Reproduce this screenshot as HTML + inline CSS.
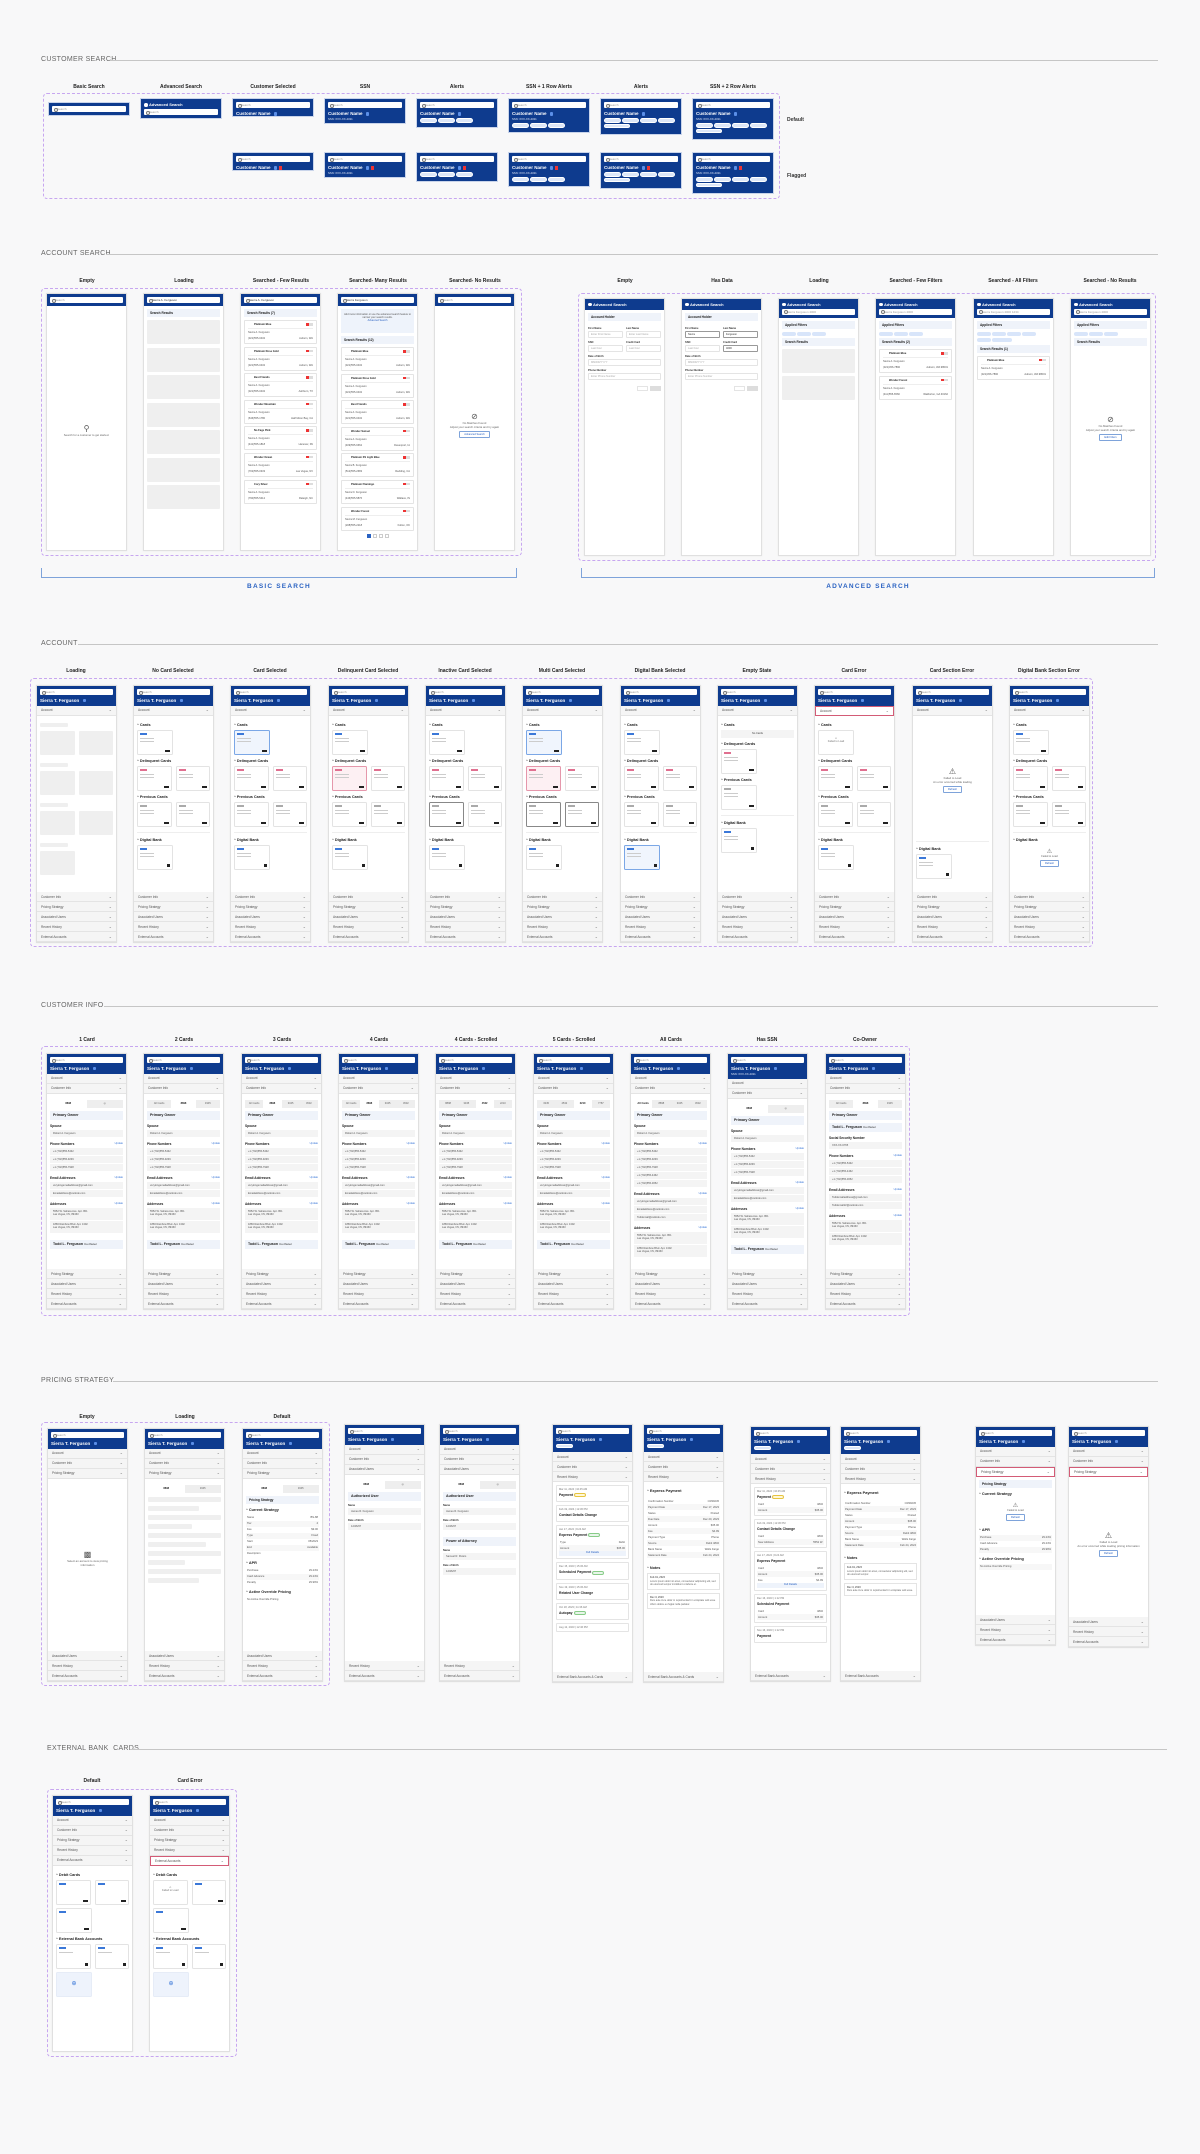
<!DOCTYPE html>
<html><head><meta charset="utf-8">
<style>
*{box-sizing:border-box;margin:0;padding:0}
body{width:1200px;height:2154px;background:#f8f8f9;position:relative;overflow:hidden;font-family:"Liberation Sans",sans-serif;color:#222}
.sh{position:absolute;font-size:7px;color:#666;letter-spacing:.3px}
.ln{position:absolute;height:1px;background:#c6c6c6}
.ct{position:absolute;width:120px;margin-left:-60px;text-align:center;font-size:5px;font-weight:bold;color:#222}
.dash{position:absolute;border:1px dashed #c7a6f0;border-radius:4px}
.brk{position:absolute;border:1px solid #7ea3da;border-top:none;height:10px}
.bl{position:absolute;font-size:6.5px;color:#2a62c2;letter-spacing:1.2px;font-weight:bold;width:200px;margin-left:-100px;text-align:center}
.lab{position:absolute;font-size:5px;font-weight:bold;color:#333}
.cs{position:absolute;width:82px;background:#0e3b8e;border:1px solid #c9d4ea;padding:3px}
.sb{height:6px;background:#fff;border-radius:1px;font-size:3px;color:#999;line-height:6px;padding-left:5px;position:relative}
.sb:before{content:"";position:absolute;left:1.5px;top:1.5px;width:2px;height:2px;border:.5px solid #777;border-radius:50%}
.nm{color:#fff;font-weight:bold;font-size:4.5px;margin-top:3px}
.nm i{display:inline-block;width:3.5px;height:3.5px;background:#5b8fe8;border-radius:1px;margin-left:2px;vertical-align:-0.5px}
.nm u{display:inline-block;width:3px;height:3.5px;background:#e33;margin-left:2px;vertical-align:-0.5px}
.ss{color:#dfe6f5;font-size:2.8px;margin-top:1px}
.chs{margin-top:2px;line-height:0}
.ch{display:inline-block;height:4.5px;width:17px;background:#dde7f8;border:.5px solid #fff;border-radius:3px;margin:0 1px 1.2px 0}
.ch.w{width:26px}
.ph{position:absolute;width:81px;background:#fff;border:1px solid #e0e0e0;box-shadow:0 0 2px rgba(0,0,0,.06);display:flex;flex-direction:column;overflow:hidden;font-size:3.2px;color:#444}
.hd{background:#0e3b8e;padding:3px 3px 3px}
.hd .nm{margin-top:2.5px}
.at{color:#fff;font-weight:bold;font-size:4px;padding:0 0 2px 0}
.at:before{content:"";display:inline-block;width:3.5px;height:3.5px;background:#fff;border-radius:50%;margin-right:1.5px;vertical-align:-0.5px}
.ar{height:10px;border-bottom:1px solid #e4e4e4;background:#f5f5f5;padding:0 4px;display:flex;justify-content:space-between;align-items:center;font-size:3.2px;color:#555;flex-shrink:0}
.ar:after{content:"\2304";font-size:4px;color:#777;line-height:2px}
.ar.er{border:1px solid #d35b76;background:#fff}
.bd{flex:1;padding:3px 3px 0;position:relative;overflow:hidden}
.bot{margin-top:auto}
.st{font-weight:bold;font-size:3.8px;color:#222;margin:4px 0 3px}
.st:before{content:"^ ";font-weight:normal}
.row{display:flex;gap:4px}
.cd{width:36px;height:25px;border:1px solid #e3e3e3;border-radius:1.5px;padding:2px;position:relative;font-size:2.6px;color:#777}
.cd b{display:block;width:7px;height:2.5px;background:#3b78d8;margin-bottom:3px}
.cd b.r{background:#e07090}
.cd b.g{background:#aaa}
.cd p{height:1.2px;background:#ccc;width:14px;margin-bottom:1.8px}
.cd .v{position:absolute;right:2px;bottom:2px;width:5px;height:2px;background:#222}
.cd.sel{border-color:#7ba7e6;background:#f0f5fd}
.cd.dl{border-color:#e597ab;background:#fdf0f3}
.cd.in{border-color:#888}
.hr{height:1px;background:#eee;margin:5px 0}
.sk{background:#efefef;border-radius:1px}
.srb{height:8px;background:#eff3fa;font-weight:bold;font-size:3.2px;color:#222;line-height:8px;padding-left:3px;margin-bottom:3px}
.ri{height:24px;border:1px solid #e4e4e4;border-radius:1px;margin-bottom:2.6px;padding:2px 3px;font-size:2.6px;color:#555}
.ri .rt{display:flex;justify-content:space-between;font-weight:bold;color:#222;border-bottom:1px solid #eee;padding:0 0 2px 6px;margin-bottom:2px}
.ri .rt span{width:7px;height:2.5px;background:linear-gradient(90deg,#e33 40%,#ddd 40%)}
.ri .sp{display:flex;justify-content:space-between;margin-top:3px}
.ctr{position:absolute;left:0;right:0;text-align:center;font-size:2.8px;color:#666}
.ctr .ic{font-size:8px;color:#555;line-height:8px}
.btn{display:inline-block;border:1px solid #7ea3da;color:#2a62c2;font-size:2.6px;padding:1px 4px;border-radius:1px;margin-top:2px}
.fl{font-size:2.6px;font-weight:bold;color:#333;margin:3px 0 1px}
.in1{height:7px;border:1px solid #e4e4e4;border-radius:1px;font-size:2.6px;color:#aaa;line-height:5px;padding-left:2px}
.g2{display:flex;gap:3px}.g2>div{flex:1}
.chip{display:inline-block;height:4px;width:14px;background:#d8e5fa;border-radius:2px;margin:0 1px 1.5px 0}
.tabs{display:flex;height:8px;background:#eee;margin:3px 0;font-size:2.6px;color:#666}
.tabs span{flex:1;text-align:center;line-height:8px}
.tabs span.a{background:#fff;font-weight:bold;color:#222}
.pob{height:9px;background:#eff3fa;font-weight:bold;font-size:3.6px;color:#222;line-height:9px;padding-left:3px;margin-bottom:3px}
.sec{font-weight:bold;font-size:3.2px;color:#222;margin:4px 0 2px;display:flex;justify-content:space-between}
.sec i{font-style:normal;color:#3b78d8;font-weight:normal;font-size:2.6px}
.fr{height:8px;background:#f4f4f4;font-size:2.6px;line-height:8px;padding-left:3px;border-bottom:1px solid #fff;color:#555}
.fr2{height:13px;background:#f4f4f4;font-size:2.6px;padding:2px 3px;border-bottom:1px solid #fff;color:#555}
.kv{display:flex;justify-content:space-between;font-size:2.7px;padding:1.5px 1px;color:#555}
.kv:nth-child(odd){background:#f7f7f7}
.hi{border:1px solid #e4e4e4;border-radius:1px;padding:2px;margin-bottom:3px;font-size:2.6px;color:#777}
.hi b{display:block;color:#222;font-size:3.4px;margin:2px 0}
.pill{display:inline-block;height:4px;width:12px;border-radius:2px;background:#e8f5ea;border:.5px solid #8c8;vertical-align:middle}
.pill.y{background:#fff8d8;border-color:#e6c440}
.note{border:1px solid #e4e4e4;padding:2px;margin-bottom:3px;font-size:2.5px;color:#666;line-height:3.5px}
</style></head><body>

<!-- ===== CUSTOMER SEARCH ===== -->
<div class="sh" style="left:41px;top:56px">CUSTOMER SEARCH</div>
<div class="ln" style="left:110px;top:60px;width:1048px"></div>
<div class="ct" style="left:89px;top:84px">Basic Search</div>
<div class="ct" style="left:181px;top:84px">Advanced Search</div>
<div class="ct" style="left:273px;top:84px">Customer Selected</div>
<div class="ct" style="left:365px;top:84px">SSN</div>
<div class="ct" style="left:457px;top:84px">Alerts</div>
<div class="ct" style="left:549px;top:84px">SSN + 1 Row Alerts</div>
<div class="ct" style="left:641px;top:84px">Alerts</div>
<div class="ct" style="left:733px;top:84px">SSN + 2 Row Alerts</div>
<div class="dash" style="left:43px;top:93px;width:737px;height:106px"></div>
<div class="lab" style="left:787px;top:117px">Default</div>
<div class="lab" style="left:787px;top:173px">Flagged</div>

<div class="cs" style="left:48px;top:102px;height:14px"><div class="sb" style="height:6px">Search</div></div>
<div class="cs" style="left:140px;top:98px;height:21px"><div class="at">Advanced Search</div><div class="sb">Search</div></div>
<div class="cs" style="left:232px;top:98px;height:19px"><div class="sb">Search</div><div class="nm">Customer Name <i></i></div></div>
<div class="cs" style="left:324px;top:98px;height:26px"><div class="sb">Search</div><div class="nm">Customer Name <i></i></div><div class="ss">SSN: XXX-XX-4321</div></div>
<div class="cs" style="left:416px;top:98px;height:30px"><div class="sb">Search</div><div class="nm">Customer Name <i></i></div><div class="chs"><span class="ch"></span><span class="ch"></span><span class="ch"></span></div></div>
<div class="cs" style="left:508px;top:98px;height:35px"><div class="sb">Search</div><div class="nm">Customer Name <i></i></div><div class="ss">SSN: XXX-XX-4321</div><div class="chs"><span class="ch"></span><span class="ch"></span><span class="ch"></span></div></div>
<div class="cs" style="left:600px;top:98px;height:37px"><div class="sb">Search</div><div class="nm">Customer Name <i></i></div><div class="chs"><span class="ch"></span><span class="ch"></span><span class="ch"></span><span class="ch"></span><span class="ch w"></span></div></div>
<div class="cs" style="left:692px;top:98px;height:42px"><div class="sb">Search</div><div class="nm">Customer Name <i></i></div><div class="ss">SSN: XXX-XX-4321</div><div class="chs"><span class="ch"></span><span class="ch"></span><span class="ch"></span><span class="ch"></span><span class="ch w"></span></div></div>

<div class="cs" style="left:232px;top:152px;height:19px"><div class="sb">Search</div><div class="nm">Customer Name <i></i><u></u></div></div>
<div class="cs" style="left:324px;top:152px;height:26px"><div class="sb">Search</div><div class="nm">Customer Name <i></i><u></u></div><div class="ss">SSN: XXX-XX-4321</div></div>
<div class="cs" style="left:416px;top:152px;height:30px"><div class="sb">Search</div><div class="nm">Customer Name <i></i><u></u></div><div class="chs"><span class="ch"></span><span class="ch"></span><span class="ch"></span></div></div>
<div class="cs" style="left:508px;top:152px;height:35px"><div class="sb">Search</div><div class="nm">Customer Name <i></i><u></u></div><div class="ss">SSN: XXX-XX-4321</div><div class="chs"><span class="ch"></span><span class="ch"></span><span class="ch"></span></div></div>
<div class="cs" style="left:600px;top:152px;height:37px"><div class="sb">Search</div><div class="nm">Customer Name <i></i><u></u></div><div class="chs"><span class="ch"></span><span class="ch"></span><span class="ch"></span><span class="ch"></span><span class="ch w"></span></div></div>
<div class="cs" style="left:692px;top:152px;height:42px"><div class="sb">Search</div><div class="nm">Customer Name <i></i><u></u></div><div class="ss">SSN: XXX-XX-4321</div><div class="chs"><span class="ch"></span><span class="ch"></span><span class="ch"></span><span class="ch"></span><span class="ch w"></span></div></div>

<!-- ===== ACCOUNT SEARCH ===== -->
<div class="sh" style="left:41px;top:250px">ACCOUNT SEARCH</div>
<div class="ln" style="left:106px;top:254px;width:1052px"></div>
<div class="ct" style="left:87px;top:278px">Empty</div>
<div class="ct" style="left:184px;top:278px">Loading</div>
<div class="ct" style="left:281px;top:278px">Searched - Few Results</div>
<div class="ct" style="left:378px;top:278px">Searched- Many Results</div>
<div class="ct" style="left:475px;top:278px">Searched- No Results</div>
<div class="ct" style="left:625px;top:278px">Empty</div>
<div class="ct" style="left:722px;top:278px">Has Data</div>
<div class="ct" style="left:819px;top:278px">Loading</div>
<div class="ct" style="left:916px;top:278px">Searched - Few Filters</div>
<div class="ct" style="left:1013px;top:278px">Searched - All Filters</div>
<div class="ct" style="left:1110px;top:278px">Searched - No Results</div>
<div class="dash" style="left:41px;top:288px;width:481px;height:268px"></div>
<div class="dash" style="left:578px;top:293px;width:578px;height:268px"></div>
<div class="brk" style="left:41px;top:568px;width:476px"></div>
<div class="brk" style="left:581px;top:568px;width:574px"></div>
<div class="bl" style="left:279px;top:583px">BASIC SEARCH</div>
<div class="bl" style="left:868px;top:583px">ADVANCED SEARCH</div>

<div class="ph" style="left:46px;top:293px;height:258px"><div class="hd" style="padding:3px"><div class="sb">Search</div></div><div class="bd"><div class="ctr" style="top:119px"><div class="ic">&#9906;</div>Search for a customer to get started.</div></div></div>
<div class="ph" style="left:143px;top:293px;height:258px"><div class="hd"><div class="sb" style="color:#333">Sierra A. Ferguson</div></div><div class="bd"><div class="srb">Search Results</div>
<div class="sk" style="height:24px;margin-bottom:3.5px"></div><div class="sk" style="height:24px;margin-bottom:3.5px"></div><div class="sk" style="height:24px;margin-bottom:3.5px"></div><div class="sk" style="height:24px;margin-bottom:3.5px"></div><div class="sk" style="height:24px;margin-bottom:3.5px"></div><div class="sk" style="height:24px;margin-bottom:3.5px"></div><div class="sk" style="height:24px"></div></div></div>
<div class="ph" style="left:240px;top:293px;height:258px"><div class="hd"><div class="sb" style="color:#333">Sierra A. Ferguson</div></div><div class="bd"><div class="srb">Search Results (7)</div>
<div class="ri"><div class="rt">Platinum Blue<span></span></div>Sierra A. Ferguson<div class="sp"><span>(321)555-0432</span><span>Auburn, WA</span></div></div>
<div class="ri"><div class="rt">Platinum Rose Gold<span></span></div>Sierra A. Ferguson<div class="sp"><span>(321)555-0432</span><span>Auburn, WA</span></div></div>
<div class="ri"><div class="rt">Best Friends<span></span></div>Sierra A. Ferguson<div class="sp"><span>(321)555-0432</span><span>Ashburn, TX</span></div></div>
<div class="ri"><div class="rt">Wonder Mountain<span></span></div>Sierra A. Ferguson<div class="sp"><span>(646)555-1780</span><span>Half Moon Bay, CA</span></div></div>
<div class="ri"><div class="rt">No Fags Pink<span></span></div>Sierra A. Ferguson<div class="sp"><span>(441)555-1818</span><span>Hanover, PA</span></div></div>
<div class="ri"><div class="rt">Wonder Ocean<span></span></div>Sierra A. Ferguson<div class="sp"><span>(702)555-0333</span><span>Las Vegas, NV</span></div></div>
<div class="ri"><div class="rt">Cory Silver<span></span></div>Sierra A. Ferguson<div class="sp"><span>(790)555-5412</span><span>Raleigh, NC</span></div></div></div></div>
<div class="ph" style="left:337px;top:293px;height:258px"><div class="hd"><div class="sb" style="color:#333">Sierra Ferguson</div></div><div class="bd"><div style="height:24px;background:#eef3fb;font-size:2.5px;text-align:center;padding-top:4px;color:#555;margin-bottom:3px">Add more information or use the advanced search feature to narrow your search results.<br><span style="color:#2a62c2">Advanced Search</span></div><div class="srb">Search Results (12)</div>
<div class="ri"><div class="rt">Platinum Blue<span></span></div>Sierra A. Ferguson<div class="sp"><span>(321)555-0432</span><span>Auburn, WA</span></div></div>
<div class="ri"><div class="rt">Platinum Rose Gold<span></span></div>Sierra A. Ferguson<div class="sp"><span>(321)555-0432</span><span>Auburn, WA</span></div></div>
<div class="ri"><div class="rt">Best Friends<span></span></div>Sierra A. Ferguson<div class="sp"><span>(321)555-0432</span><span>Auburn, WA</span></div></div>
<div class="ri"><div class="rt">Wonder Sunset<span></span></div>Sierra A. Ferguson<div class="sp"><span>(409)555-6662</span><span>Davenport, IA</span></div></div>
<div class="ri"><div class="rt">Platinum XS Light Blue<span></span></div>Sierra B. Ferguson<div class="sp"><span>(512)555-2683</span><span>Redding, CA</span></div></div>
<div class="ri"><div class="rt">Platinum Flamingo<span></span></div>Sierra D. Ferguson<div class="sp"><span>(446)555-5876</span><span>Wallace, IN</span></div></div>
<div class="ri"><div class="rt">Wonder Forest<span></span></div>Sierra M. Ferguson<div class="sp"><span>(208)555-2218</span><span>Fulton, OK</span></div></div>
<div style="text-align:center;margin-top:3px;line-height:0"><span style="display:inline-block;width:4px;height:4px;background:#2a62c2;margin:0 1px"></span><span style="display:inline-block;width:4px;height:4px;border:.5px solid #ccc;margin:0 1px"></span><span style="display:inline-block;width:4px;height:4px;border:.5px solid #ccc;margin:0 1px"></span><span style="display:inline-block;width:4px;height:4px;border:.5px solid #ccc;margin:0 1px"></span></div></div></div>
<div class="ph" style="left:434px;top:293px;height:258px"><div class="hd"><div class="sb">Search</div></div><div class="bd"><div class="ctr" style="top:107px"><div class="ic">&#8856;</div>No Matches Found<br>Adjust your search criteria and try again<br><span class="btn">Advanced Search</span></div></div></div>

<!-- advanced -->
<div class="ph" style="left:584px;top:298px;height:258px"><div class="hd" style="padding:2.5px 3px 1px"><div class="at">Advanced Search</div></div><div class="bd"><div class="srb">Account Holder</div>
<div class="g2"><div><div class="fl">First Name</div><div class="in1">Enter First Name</div></div><div><div class="fl">Last Name</div><div class="in1">Enter Last Name</div></div></div>
<div class="g2"><div><div class="fl">SSN</div><div class="in1">Last Four</div></div><div><div class="fl">Credit Card</div><div class="in1">Last Four</div></div></div>
<div class="fl">Date of Birth</div><div class="in1">MM/DD/YYYY</div><div class="fl">Phone Number</div><div class="in1">Enter Phone Number</div>
<div style="text-align:right;margin-top:6px;line-height:0"><span style="display:inline-block;width:11px;height:5px;border:1px solid #e4e4e4;margin-right:2px"></span><span style="display:inline-block;width:11px;height:5px;background:#ddd"></span></div></div></div>
<div class="ph" style="left:681px;top:298px;height:258px"><div class="hd" style="padding:2.5px 3px 1px"><div class="at">Advanced Search</div></div><div class="bd"><div class="srb">Account Holder</div>
<div class="g2"><div><div class="fl">First Name</div><div class="in1" style="border-color:#999;color:#333">Sierra</div></div><div><div class="fl">Last Name</div><div class="in1" style="border-color:#999;color:#333">Ferguson</div></div></div>
<div class="g2"><div><div class="fl">SSN</div><div class="in1">Last Four</div></div><div><div class="fl">Credit Card</div><div class="in1" style="border-color:#999;color:#333">4000</div></div></div>
<div class="fl">Date of Birth</div><div class="in1">MM/DD/YYYY</div><div class="fl">Phone Number</div><div class="in1">Enter Phone Number</div>
<div style="text-align:right;margin-top:6px;line-height:0"><span style="display:inline-block;width:11px;height:5px;border:1px solid #e4e4e4;margin-right:2px"></span><span style="display:inline-block;width:11px;height:5px;background:#ddd"></span></div></div></div>
<div class="ph" style="left:778px;top:298px;height:258px"><div class="hd" style="padding:2.5px 3px 3px"><div class="at">Advanced Search</div><div class="sb">Sierra Ferguson 4000</div></div><div class="bd"><div class="srb">Applied Filters</div><div><span class="chip"></span><span class="chip"></span><span class="chip"></span></div><div class="srb">Search Results</div><div class="sk" style="height:24px;margin-bottom:3px"></div><div class="sk" style="height:24px"></div></div></div>
<div class="ph" style="left:875px;top:298px;height:258px"><div class="hd" style="padding:2.5px 3px 3px"><div class="at">Advanced Search</div><div class="sb">Sierra Ferguson 4000</div></div><div class="bd"><div class="srb">Applied Filters</div><div><span class="chip"></span><span class="chip"></span><span class="chip"></span></div><div class="srb">Search Results (2)</div>
<div class="ri"><div class="rt">Platinum Blue<span></span></div>Sierra A. Ferguson<div class="sp"><span>(321)456-7890</span><span>Auburn, WA 98001</span></div></div>
<div class="ri"><div class="rt">Wonder Forest<span></span></div>Sierra A. Ferguson<div class="sp"><span>(411)555-6560</span><span>Waldorton, GA 30162</span></div></div></div></div>
<div class="ph" style="left:973px;top:298px;height:258px"><div class="hd" style="padding:2.5px 3px 3px"><div class="at">Advanced Search</div><div class="sb">Sierra Ferguson 4000 1234</div></div><div class="bd"><div class="srb">Applied Filters</div><div><span class="chip"></span><span class="chip"></span><span class="chip"></span><span class="chip"></span><span class="chip"></span><span class="chip" style="width:20px"></span></div><div class="srb">Search Results (1)</div>
<div class="ri"><div class="rt">Platinum Blue<span></span></div>Sierra A. Ferguson<div class="sp"><span>(321)456-7890</span><span>Auburn, WA 98001</span></div></div></div></div>
<div class="ph" style="left:1070px;top:298px;height:258px"><div class="hd" style="padding:2.5px 3px 3px"><div class="at">Advanced Search</div><div class="sb">Sierra Ferguson 4000</div></div><div class="bd"><div class="srb">Applied Filters</div><div><span class="chip"></span><span class="chip"></span><span class="chip"></span></div><div class="srb">Search Results</div><div class="ctr" style="top:98px"><div class="ic">&#8856;</div>No Matches Found<br>Adjust your search criteria and try again<br><span class="btn">Edit Filters</span></div></div></div>

<!-- ===== ACCOUNT ===== -->
<div class="sh" style="left:41px;top:640px">ACCOUNT</div>
<div class="ln" style="left:78px;top:644px;width:1080px"></div>
<div class="ct" style="left:76px;top:668px">Loading</div>
<div class="ct" style="left:173px;top:668px">No Card Selected</div>
<div class="ct" style="left:270px;top:668px">Card Selected</div>
<div class="ct" style="left:368px;top:668px">Delinquent Card Selected</div>
<div class="ct" style="left:465px;top:668px">Inactive Card Selected</div>
<div class="ct" style="left:562px;top:668px">Multi Card Selected</div>
<div class="ct" style="left:660px;top:668px">Digital Bank Selected</div>
<div class="ct" style="left:757px;top:668px">Empty State</div>
<div class="ct" style="left:854px;top:668px">Card Error</div>
<div class="ct" style="left:952px;top:668px">Card Section Error</div>
<div class="ct" style="left:1049px;top:668px">Digital Bank Section Error</div>
<div class="dash" style="left:30px;top:678px;width:1063px;height:269px"></div>

<!-- account phones generated by hand -->
<div class="ph" style="left:36px;top:685px;height:258px"><div class="hd"><div class="sb">Search</div><div class="nm">Sierra T. Ferguson <i></i></div></div><div class="ar">Account</div><div class="bd">
<div class="sk" style="width:28px;height:4px;margin:4px 0"></div><div class="row"><div class="sk" style="width:35px;height:24px"></div><div class="sk" style="width:35px;height:24px"></div></div>
<div class="sk" style="width:28px;height:4px;margin:8px 0 4px"></div><div class="row"><div class="sk" style="width:35px;height:24px"></div><div class="sk" style="width:35px;height:24px"></div></div>
<div class="sk" style="width:28px;height:4px;margin:8px 0 4px"></div><div class="row"><div class="sk" style="width:35px;height:24px"></div><div class="sk" style="width:35px;height:24px"></div></div>
<div class="sk" style="width:28px;height:4px;margin:8px 0 4px"></div><div class="sk" style="width:35px;height:24px"></div></div>
<div class="bot"><div class="ar">Customer Info</div><div class="ar">Pricing Strategy</div><div class="ar">Associated Users</div><div class="ar">Recent History</div><div class="ar">External Accounts</div></div></div>

<div class="ph" style="left:133px;top:685px;height:258px"><div class="hd"><div class="sb">Search</div><div class="nm">Sierra T. Ferguson <i></i></div></div><div class="ar">Account</div><div class="bd">
<div class="st">Cards</div><div class="row"><div class="cd"><b></b><p></p><p></p><span class="v"></span></div></div>
<div class="st">Delinquent Cards</div><div class="row"><div class="cd"><b class="r"></b><p></p><p></p><span class="v"></span></div><div class="cd"><b class="r"></b><p></p><p></p><span class="v"></span></div></div>
<div class="st">Previous Cards</div><div class="row"><div class="cd"><b class="g"></b><p></p><p></p><span class="v"></span></div><div class="cd"><b class="g"></b><p></p><p></p><span class="v"></span></div></div>
<div class="hr"></div><div class="st">Digital Bank</div><div class="row"><div class="cd"><b></b><p></p><p></p><span class="v" style="width:3px;height:3px"></span></div></div></div>
<div class="bot"><div class="ar">Customer Info</div><div class="ar">Pricing Strategy</div><div class="ar">Associated Users</div><div class="ar">Recent History</div><div class="ar">External Accounts</div></div></div>

<div class="ph" style="left:230px;top:685px;height:258px"><div class="hd"><div class="sb">Search</div><div class="nm">Sierra T. Ferguson <i></i></div></div><div class="ar">Account</div><div class="bd">
<div class="st">Cards</div><div class="row"><div class="cd sel"><b></b><p></p><p></p><span class="v"></span></div></div>
<div class="st">Delinquent Cards</div><div class="row"><div class="cd"><b class="r"></b><p></p><p></p><span class="v"></span></div><div class="cd"><b class="r"></b><p></p><p></p><span class="v"></span></div></div>
<div class="st">Previous Cards</div><div class="row"><div class="cd"><b class="g"></b><p></p><p></p><span class="v"></span></div><div class="cd"><b class="g"></b><p></p><p></p><span class="v"></span></div></div>
<div class="hr"></div><div class="st">Digital Bank</div><div class="row"><div class="cd"><b></b><p></p><p></p><span class="v" style="width:3px;height:3px"></span></div></div></div>
<div class="bot"><div class="ar">Customer Info</div><div class="ar">Pricing Strategy</div><div class="ar">Associated Users</div><div class="ar">Recent History</div><div class="ar">External Accounts</div></div></div>

<div class="ph" style="left:328px;top:685px;height:258px"><div class="hd"><div class="sb">Search</div><div class="nm">Sierra T. Ferguson <i></i></div></div><div class="ar">Account</div><div class="bd">
<div class="st">Cards</div><div class="row"><div class="cd"><b></b><p></p><p></p><span class="v"></span></div></div>
<div class="st">Delinquent Cards</div><div class="row"><div class="cd dl"><b class="r"></b><p></p><p></p><span class="v"></span></div><div class="cd"><b class="r"></b><p></p><p></p><span class="v"></span></div></div>
<div class="st">Previous Cards</div><div class="row"><div class="cd"><b class="g"></b><p></p><p></p><span class="v"></span></div><div class="cd"><b class="g"></b><p></p><p></p><span class="v"></span></div></div>
<div class="hr"></div><div class="st">Digital Bank</div><div class="row"><div class="cd"><b></b><p></p><p></p><span class="v" style="width:3px;height:3px"></span></div></div></div>
<div class="bot"><div class="ar">Customer Info</div><div class="ar">Pricing Strategy</div><div class="ar">Associated Users</div><div class="ar">Recent History</div><div class="ar">External Accounts</div></div></div>

<div class="ph" style="left:425px;top:685px;height:258px"><div class="hd"><div class="sb">Search</div><div class="nm">Sierra T. Ferguson <i></i></div></div><div class="ar">Account</div><div class="bd">
<div class="st">Cards</div><div class="row"><div class="cd"><b></b><p></p><p></p><span class="v"></span></div></div>
<div class="st">Delinquent Cards</div><div class="row"><div class="cd"><b class="r"></b><p></p><p></p><span class="v"></span></div><div class="cd"><b class="r"></b><p></p><p></p><span class="v"></span></div></div>
<div class="st">Previous Cards</div><div class="row"><div class="cd in"><b class="g"></b><p></p><p></p><span class="v"></span></div><div class="cd"><b class="g"></b><p></p><p></p><span class="v"></span></div></div>
<div class="hr"></div><div class="st">Digital Bank</div><div class="row"><div class="cd"><b></b><p></p><p></p><span class="v" style="width:3px;height:3px"></span></div></div></div>
<div class="bot"><div class="ar">Customer Info</div><div class="ar">Pricing Strategy</div><div class="ar">Associated Users</div><div class="ar">Recent History</div><div class="ar">External Accounts</div></div></div>

<div class="ph" style="left:522px;top:685px;height:258px"><div class="hd"><div class="sb">Search</div><div class="nm">Sierra T. Ferguson <i></i></div></div><div class="ar">Account</div><div class="bd">
<div class="st">Cards</div><div class="row"><div class="cd sel"><b></b><p></p><p></p><span class="v"></span></div></div>
<div class="st">Delinquent Cards</div><div class="row"><div class="cd dl"><b class="r"></b><p></p><p></p><span class="v"></span></div><div class="cd"><b class="r"></b><p></p><p></p><span class="v"></span></div></div>
<div class="st">Previous Cards</div><div class="row"><div class="cd in"><b class="g"></b><p></p><p></p><span class="v"></span></div><div class="cd in"><b class="g"></b><p></p><p></p><span class="v"></span></div></div>
<div class="hr"></div><div class="st">Digital Bank</div><div class="row"><div class="cd"><b></b><p></p><p></p><span class="v" style="width:3px;height:3px"></span></div></div></div>
<div class="bot"><div class="ar">Customer Info</div><div class="ar">Pricing Strategy</div><div class="ar">Associated Users</div><div class="ar">Recent History</div><div class="ar">External Accounts</div></div></div>

<div class="ph" style="left:620px;top:685px;height:258px"><div class="hd"><div class="sb">Search</div><div class="nm">Sierra T. Ferguson <i></i></div></div><div class="ar">Account</div><div class="bd">
<div class="st">Cards</div><div class="row"><div class="cd"><b></b><p></p><p></p><span class="v"></span></div></div>
<div class="st">Delinquent Cards</div><div class="row"><div class="cd"><b class="r"></b><p></p><p></p><span class="v"></span></div><div class="cd"><b class="r"></b><p></p><p></p><span class="v"></span></div></div>
<div class="st">Previous Cards</div><div class="row"><div class="cd"><b class="g"></b><p></p><p></p><span class="v"></span></div><div class="cd"><b class="g"></b><p></p><p></p><span class="v"></span></div></div>
<div class="hr"></div><div class="st">Digital Bank</div><div class="row"><div class="cd sel"><b></b><p></p><p></p><span class="v" style="width:3px;height:3px"></span></div></div></div>
<div class="bot"><div class="ar">Customer Info</div><div class="ar">Pricing Strategy</div><div class="ar">Associated Users</div><div class="ar">Recent History</div><div class="ar">External Accounts</div></div></div>

<div class="ph" style="left:717px;top:685px;height:258px"><div class="hd"><div class="sb">Search</div><div class="nm">Sierra T. Ferguson <i></i></div></div><div class="ar">Account</div><div class="bd">
<div class="st">Cards</div><div style="height:8px;background:#f4f4f4;text-align:center;line-height:8px;font-size:2.6px">No Cards</div>
<div class="st">Delinquent Cards</div><div class="row"><div class="cd"><b class="r"></b><p></p><p></p><span class="v"></span></div></div>
<div class="st">Previous Cards</div><div class="row"><div class="cd"><b class="g"></b><p></p><p></p><span class="v"></span></div></div>
<div class="hr"></div><div class="st">Digital Bank</div><div class="row"><div class="cd"><b></b><p></p><p></p><span class="v" style="width:3px;height:3px"></span></div></div></div>
<div class="bot"><div class="ar">Customer Info</div><div class="ar">Pricing Strategy</div><div class="ar">Associated Users</div><div class="ar">Recent History</div><div class="ar">External Accounts</div></div></div>

<div class="ph" style="left:814px;top:685px;height:258px"><div class="hd"><div class="sb">Search</div><div class="nm">Sierra T. Ferguson <i></i></div></div><div class="ar er">Account</div><div class="bd">
<div class="st">Cards</div><div class="row"><div class="cd" style="text-align:center;padding-top:6px">&#9888;<br>Failed to Load</div></div>
<div class="st">Delinquent Cards</div><div class="row"><div class="cd"><b class="r"></b><p></p><p></p><span class="v"></span></div><div class="cd"><b class="r"></b><p></p><p></p><span class="v"></span></div></div>
<div class="st">Previous Cards</div><div class="row"><div class="cd"><b class="g"></b><p></p><p></p><span class="v"></span></div><div class="cd"><b class="g"></b><p></p><p></p><span class="v"></span></div></div>
<div class="hr"></div><div class="st">Digital Bank</div><div class="row"><div class="cd"><b></b><p></p><p></p><span class="v" style="width:3px;height:3px"></span></div></div></div>
<div class="bot"><div class="ar">Customer Info</div><div class="ar">Pricing Strategy</div><div class="ar">Associated Users</div><div class="ar">Recent History</div><div class="ar">External Accounts</div></div></div>

<div class="ph" style="left:912px;top:685px;height:258px"><div class="hd"><div class="sb">Search</div><div class="nm">Sierra T. Ferguson <i></i></div></div><div class="ar">Account</div><div class="bd">
<div class="ctr" style="top:52px"><div class="ic">&#9888;</div>Failed to Load<br>An error occurred while loading<br><span class="btn">Refresh</span></div>
<div style="position:absolute;top:120px;left:3px;right:3px"><div class="hr"></div><div class="st">Digital Bank</div><div class="row"><div class="cd"><b></b><p></p><p></p><span class="v" style="width:3px;height:3px"></span></div></div></div></div>
<div class="bot"><div class="ar">Customer Info</div><div class="ar">Pricing Strategy</div><div class="ar">Associated Users</div><div class="ar">Recent History</div><div class="ar">External Accounts</div></div></div>

<div class="ph" style="left:1009px;top:685px;height:258px"><div class="hd"><div class="sb">Search</div><div class="nm">Sierra T. Ferguson <i></i></div></div><div class="ar">Account</div><div class="bd">
<div class="st">Cards</div><div class="row"><div class="cd"><b></b><p></p><p></p><span class="v"></span></div></div>
<div class="st">Delinquent Cards</div><div class="row"><div class="cd"><b class="r"></b><p></p><p></p><span class="v"></span></div><div class="cd"><b class="r"></b><p></p><p></p><span class="v"></span></div></div>
<div class="st">Previous Cards</div><div class="row"><div class="cd"><b class="g"></b><p></p><p></p><span class="v"></span></div><div class="cd"><b class="g"></b><p></p><p></p><span class="v"></span></div></div>
<div class="hr"></div><div class="st">Digital Bank</div><div style="text-align:center;font-size:2.6px;color:#666;padding-top:3px"><span style="font-size:6px">&#9888;</span><br>Failed to Load<br><span class="btn">Refresh</span></div></div>
<div class="bot"><div class="ar">Customer Info</div><div class="ar">Pricing Strategy</div><div class="ar">Associated Users</div><div class="ar">Recent History</div><div class="ar">External Accounts</div></div></div>

<!-- ===== CUSTOMER INFO ===== -->
<div class="sh" style="left:41px;top:1002px">CUSTOMER INFO</div>
<div class="ln" style="left:104px;top:1006px;width:1054px"></div>
<div class="ct" style="left:87px;top:1037px">1 Card</div>
<div class="ct" style="left:184px;top:1037px">2 Cards</div>
<div class="ct" style="left:282px;top:1037px">3 Cards</div>
<div class="ct" style="left:379px;top:1037px">4 Cards</div>
<div class="ct" style="left:476px;top:1037px">4 Cards - Scrolled</div>
<div class="ct" style="left:574px;top:1037px">5 Cards - Scrolled</div>
<div class="ct" style="left:671px;top:1037px">All Cards</div>
<div class="ct" style="left:767px;top:1037px">Has SSN</div>
<div class="ct" style="left:865px;top:1037px">Co-Owner</div>
<div class="dash" style="left:41px;top:1046px;width:869px;height:270px"></div>

<!-- template repeated -->
<div class="ph" style="left:46px;top:1053px;height:257px"><div class="hd"><div class="sb">Search</div><div class="nm">Sierra T. Ferguson <i></i></div></div><div class="ar">Account</div><div class="ar">Customer Info</div><div class="bd">
<div class="tabs"><span class="a">8898</span><span>&#9678;</span></div><div class="pob">Primary Owner</div>
<div class="sec">Spouse</div><div class="fr">Robert A. Ferguson</div>
<div class="sec">Phone Numbers<i>Update</i></div><div class="fr">+1 (702)555-5432</div><div class="fr">+1 (702)555-9239</div><div class="fr">+1 (702)555-7928</div>
<div class="sec">Email Addresses<i>Update</i></div><div class="fr">verylongemailaddress@gmail.com</div><div class="fr">Emailaddress@outlook.com</div>
<div class="sec">Addresses<i>Update</i></div><div class="fr2">5552 W. Sahara Ave. Apt. 801<br>Las Vegas, NV, 89463</div><div class="fr2">1866 Rainbow Blvd. Apt. 1302<br>Las Vegas, NV, 89463</div>
<div class="pob" style="margin-top:6px">Todd L. Ferguson <span style="font-weight:normal;font-size:2.8px">Co-Owner</span></div></div>
<div class="bot"><div class="ar">Pricing Strategy</div><div class="ar">Associated Users</div><div class="ar">Recent History</div><div class="ar">External Accounts</div></div></div>

<div class="ph" style="left:143px;top:1053px;height:257px"><div class="hd"><div class="sb">Search</div><div class="nm">Sierra T. Ferguson <i></i></div></div><div class="ar">Account</div><div class="ar">Customer Info</div><div class="bd">
<div class="tabs"><span>All Cards</span><span class="a">8898</span><span>3345</span></div><div class="pob">Primary Owner</div>
<div class="sec">Spouse</div><div class="fr">Robert A. Ferguson</div>
<div class="sec">Phone Numbers<i>Update</i></div><div class="fr">+1 (702)555-5432</div><div class="fr">+1 (702)555-9239</div><div class="fr">+1 (702)555-7928</div>
<div class="sec">Email Addresses<i>Update</i></div><div class="fr">verylongemailaddress@gmail.com</div><div class="fr">Emailaddress@outlook.com</div>
<div class="sec">Addresses<i>Update</i></div><div class="fr2">5552 W. Sahara Ave. Apt. 801<br>Las Vegas, NV, 89463</div><div class="fr2">1866 Rainbow Blvd. Apt. 1302<br>Las Vegas, NV, 89463</div>
<div class="pob" style="margin-top:6px">Todd L. Ferguson <span style="font-weight:normal;font-size:2.8px">Co-Owner</span></div></div>
<div class="bot"><div class="ar">Pricing Strategy</div><div class="ar">Associated Users</div><div class="ar">Recent History</div><div class="ar">External Accounts</div></div></div>

<div class="ph" style="left:241px;top:1053px;height:257px"><div class="hd"><div class="sb">Search</div><div class="nm">Sierra T. Ferguson <i></i></div></div><div class="ar">Account</div><div class="ar">Customer Info</div><div class="bd">
<div class="tabs"><span>All Cards</span><span class="a">8898</span><span>3345</span><span>4532</span></div><div class="pob">Primary Owner</div>
<div class="sec">Spouse</div><div class="fr">Robert A. Ferguson</div>
<div class="sec">Phone Numbers<i>Update</i></div><div class="fr">+1 (702)555-5432</div><div class="fr">+1 (702)555-9239</div><div class="fr">+1 (702)555-7928</div>
<div class="sec">Email Addresses<i>Update</i></div><div class="fr">verylongemailaddress@gmail.com</div><div class="fr">Emailaddress@outlook.com</div>
<div class="sec">Addresses<i>Update</i></div><div class="fr2">5552 W. Sahara Ave. Apt. 801<br>Las Vegas, NV, 89463</div><div class="fr2">1866 Rainbow Blvd. Apt. 1302<br>Las Vegas, NV, 89463</div>
<div class="pob" style="margin-top:6px">Todd L. Ferguson <span style="font-weight:normal;font-size:2.8px">Co-Owner</span></div></div>
<div class="bot"><div class="ar">Pricing Strategy</div><div class="ar">Associated Users</div><div class="ar">Recent History</div><div class="ar">External Accounts</div></div></div>

<div class="ph" style="left:338px;top:1053px;height:257px"><div class="hd"><div class="sb">Search</div><div class="nm">Sierra T. Ferguson <i></i></div></div><div class="ar">Account</div><div class="ar">Customer Info</div><div class="bd">
<div class="tabs"><span>All Cards</span><span class="a">8898</span><span>3345</span><span>4532</span></div><div class="pob">Primary Owner</div>
<div class="sec">Spouse</div><div class="fr">Robert A. Ferguson</div>
<div class="sec">Phone Numbers<i>Update</i></div><div class="fr">+1 (702)555-5432</div><div class="fr">+1 (702)555-9239</div><div class="fr">+1 (702)555-7928</div>
<div class="sec">Email Addresses<i>Update</i></div><div class="fr">verylongemailaddress@gmail.com</div><div class="fr">Emailaddress@outlook.com</div>
<div class="sec">Addresses<i>Update</i></div><div class="fr2">5552 W. Sahara Ave. Apt. 801<br>Las Vegas, NV, 89463</div><div class="fr2">1866 Rainbow Blvd. Apt. 1302<br>Las Vegas, NV, 89463</div>
<div class="pob" style="margin-top:6px">Todd L. Ferguson <span style="font-weight:normal;font-size:2.8px">Co-Owner</span></div></div>
<div class="bot"><div class="ar">Pricing Strategy</div><div class="ar">Associated Users</div><div class="ar">Recent History</div><div class="ar">External Accounts</div></div></div>

<div class="ph" style="left:435px;top:1053px;height:257px"><div class="hd"><div class="sb">Search</div><div class="nm">Sierra T. Ferguson <i></i></div></div><div class="ar">Account</div><div class="ar">Customer Info</div><div class="bd">
<div class="tabs"><span>8898</span><span>3345</span><span class="a">4532</span><span>2210</span></div><div class="pob">Primary Owner</div>
<div class="sec">Spouse</div><div class="fr">Robert A. Ferguson</div>
<div class="sec">Phone Numbers<i>Update</i></div><div class="fr">+1 (702)555-5432</div><div class="fr">+1 (702)555-9239</div><div class="fr">+1 (702)555-7928</div>
<div class="sec">Email Addresses<i>Update</i></div><div class="fr">verylongemailaddress@gmail.com</div><div class="fr">Emailaddress@outlook.com</div>
<div class="sec">Addresses<i>Update</i></div><div class="fr2">5552 W. Sahara Ave. Apt. 801<br>Las Vegas, NV, 89463</div><div class="fr2">1866 Rainbow Blvd. Apt. 1302<br>Las Vegas, NV, 89463</div>
<div class="pob" style="margin-top:6px">Todd L. Ferguson <span style="font-weight:normal;font-size:2.8px">Co-Owner</span></div></div>
<div class="bot"><div class="ar">Pricing Strategy</div><div class="ar">Associated Users</div><div class="ar">Recent History</div><div class="ar">External Accounts</div></div></div>

<div class="ph" style="left:533px;top:1053px;height:257px"><div class="hd"><div class="sb">Search</div><div class="nm">Sierra T. Ferguson <i></i></div></div><div class="ar">Account</div><div class="ar">Customer Info</div><div class="bd">
<div class="tabs"><span>3345</span><span>4532</span><span class="a">2210</span><span>7787</span></div><div class="pob">Primary Owner</div>
<div class="sec">Spouse</div><div class="fr">Robert A. Ferguson</div>
<div class="sec">Phone Numbers<i>Update</i></div><div class="fr">+1 (702)555-5432</div><div class="fr">+1 (702)555-9239</div><div class="fr">+1 (702)555-7928</div>
<div class="sec">Email Addresses<i>Update</i></div><div class="fr">verylongemailaddress@gmail.com</div><div class="fr">Emailaddress@outlook.com</div>
<div class="sec">Addresses<i>Update</i></div><div class="fr2">5552 W. Sahara Ave. Apt. 801<br>Las Vegas, NV, 89463</div><div class="fr2">1866 Rainbow Blvd. Apt. 1302<br>Las Vegas, NV, 89463</div>
<div class="pob" style="margin-top:6px">Todd L. Ferguson <span style="font-weight:normal;font-size:2.8px">Co-Owner</span></div></div>
<div class="bot"><div class="ar">Pricing Strategy</div><div class="ar">Associated Users</div><div class="ar">Recent History</div><div class="ar">External Accounts</div></div></div>

<div class="ph" style="left:630px;top:1053px;height:257px"><div class="hd"><div class="sb">Search</div><div class="nm">Sierra T. Ferguson <i></i></div></div><div class="ar">Account</div><div class="ar">Customer Info</div><div class="bd">
<div class="tabs"><span class="a">All Cards</span><span>8898</span><span>3345</span><span>4532</span></div><div class="pob">Primary Owner</div>
<div class="sec">Spouse</div><div class="fr">Robert A. Ferguson</div>
<div class="sec">Phone Numbers<i>Update</i></div><div class="fr">+1 (702)555-5432</div><div class="fr">+1 (702)555-9239</div><div class="fr">+1 (702)555-7928</div><div class="fr">+1 (702)555-4462</div><div class="fr">+1 (702)555-3052</div>
<div class="sec">Email Addresses<i>Update</i></div><div class="fr">verylongemailaddress@gmail.com</div><div class="fr">Emailaddress@outlook.com</div><div class="fr">Toddemail@outlook.com</div>
<div class="sec">Addresses<i>Update</i></div><div class="fr2">5552 W. Sahara Ave. Apt. 801<br>Las Vegas, NV, 89463</div><div class="fr2">1866 Rainbow Blvd. Apt. 1302<br>Las Vegas, NV, 89463</div></div>
<div class="bot"><div class="ar">Pricing Strategy</div><div class="ar">Associated Users</div><div class="ar">Recent History</div><div class="ar">External Accounts</div></div></div>

<div class="ph" style="left:727px;top:1053px;height:257px"><div class="hd"><div class="sb">Search</div><div class="nm">Sierra T. Ferguson <i></i></div><div class="ss">SSN: XXX-XX-4321</div></div><div class="ar">Account</div><div class="ar">Customer Info</div><div class="bd">
<div class="tabs"><span class="a">8898</span><span>&#9678;</span></div><div class="pob">Primary Owner</div>
<div class="sec">Spouse</div><div class="fr">Robert A. Ferguson</div>
<div class="sec">Phone Numbers<i>Update</i></div><div class="fr">+1 (702)555-5432</div><div class="fr">+1 (702)555-9239</div><div class="fr">+1 (702)555-7928</div>
<div class="sec">Email Addresses<i>Update</i></div><div class="fr">verylongemailaddress@gmail.com</div><div class="fr">Emailaddress@outlook.com</div>
<div class="sec">Addresses<i>Update</i></div><div class="fr2">5552 W. Sahara Ave. Apt. 801<br>Las Vegas, NV, 89463</div><div class="fr2">1866 Rainbow Blvd. Apt. 1302<br>Las Vegas, NV, 89463</div>
<div class="pob" style="margin-top:6px">Todd L. Ferguson <span style="font-weight:normal;font-size:2.8px">Co-Owner</span></div></div>
<div class="bot"><div class="ar">Pricing Strategy</div><div class="ar">Associated Users</div><div class="ar">Recent History</div><div class="ar">External Accounts</div></div></div>

<div class="ph" style="left:825px;top:1053px;height:257px"><div class="hd"><div class="sb">Search</div><div class="nm">Sierra T. Ferguson <i></i></div></div><div class="ar">Account</div><div class="ar">Customer Info</div><div class="bd">
<div class="tabs"><span>All Cards</span><span class="a">8898</span><span>3345</span></div><div class="pob">Primary Owner</div><div class="pob">Todd L. Ferguson <span style="font-weight:normal;font-size:2.8px">Co-Owner</span></div>
<div class="sec">Social Security Number</div><div class="fr">XXX-XX-6765</div>
<div class="sec">Phone Numbers<i>Update</i></div><div class="fr">+1 (702)555-5432</div><div class="fr">+1 (702)555-4462</div><div class="fr">+1 (702)555-3052</div>
<div class="sec">Email Addresses<i>Update</i></div><div class="fr">Toddemailaddress@gmail.com</div><div class="fr">Toddemail22@outlook.com</div>
<div class="sec">Addresses<i>Update</i></div><div class="fr2">5552 W. Sahara Ave. Apt. 801<br>Las Vegas, NV, 89463</div><div class="fr2">1866 Rainbow Blvd. Apt. 1302<br>Las Vegas, NV, 89463</div></div>
<div class="bot"><div class="ar">Pricing Strategy</div><div class="ar">Associated Users</div><div class="ar">Recent History</div><div class="ar">External Accounts</div></div></div>

<!-- ===== PRICING STRATEGY ===== -->
<div class="sh" style="left:41px;top:1377px">PRICING STRATEGY</div>
<div class="ln" style="left:113px;top:1381px;width:1045px"></div>
<div class="ct" style="left:87px;top:1414px">Empty</div>
<div class="ct" style="left:185px;top:1414px">Loading</div>
<div class="ct" style="left:282px;top:1414px">Default</div>
<div class="dash" style="left:41px;top:1422px;width:289px;height:264px"></div>

<div class="ph" style="left:47px;top:1428px;height:254px"><div class="hd"><div class="sb">Search</div><div class="nm">Sierra T. Ferguson <i></i></div></div><div class="ar">Account</div><div class="ar">Customer Info</div><div class="ar">Pricing Strategy</div><div class="bd"><div class="ctr" style="top:72px"><div class="ic">&#9641;</div>Select an account to view pricing<br>information</div></div>
<div class="bot"><div class="ar">Associated Users</div><div class="ar">Recent History</div><div class="ar">External Accounts</div></div></div>
<div class="ph" style="left:144px;top:1428px;height:254px"><div class="hd"><div class="sb">Search</div><div class="nm">Sierra T. Ferguson <i></i></div></div><div class="ar">Account</div><div class="ar">Customer Info</div><div class="ar">Pricing Strategy</div><div class="bd"><div class="tabs"><span class="a">8898</span><span>3345</span></div>
<div class="sk" style="height:5px;margin:4px 0"></div><div class="sk" style="height:5px;margin:4px 0;width:70%"></div><div class="sk" style="height:5px;margin:4px 0"></div><div class="sk" style="height:5px;margin:4px 0;width:60%"></div><div class="sk" style="height:5px;margin:4px 0"></div><div class="sk" style="height:5px;margin:4px 0;width:80%"></div><div class="sk" style="height:5px;margin:4px 0"></div><div class="sk" style="height:5px;margin:4px 0;width:50%"></div><div class="sk" style="height:5px;margin:4px 0"></div><div class="sk" style="height:5px;margin:4px 0;width:70%"></div></div>
<div class="bot"><div class="ar">Associated Users</div><div class="ar">Recent History</div><div class="ar">External Accounts</div></div></div>
<div class="ph" style="left:242px;top:1428px;height:254px"><div class="hd"><div class="sb">Search</div><div class="nm">Sierra T. Ferguson <i></i></div></div><div class="ar">Account</div><div class="ar">Customer Info</div><div class="ar">Pricing Strategy</div><div class="bd"><div class="tabs"><span class="a">8898</span><span>3345</span></div><div class="srb">Pricing Strategy</div>
<div class="st">Current Strategy</div><div class="kv"><span>Name</span><span>BS-88</span></div><div class="kv"><span>Tier</span><span>4</span></div><div class="kv"><span>Fee</span><span>$9.00</span></div><div class="kv"><span>Type</span><span>Fixed</span></div><div class="kv"><span>Start</span><span>05/2023</span></div><div class="kv"><span>End</span><span>Available</span></div><div class="kv"><span>Description</span><span></span></div>
<div class="st">APR</div><div class="kv"><span>Purchase</span><span>29.24%</span></div><div class="kv"><span>Cash Advance</span><span>29.24%</span></div><div class="kv"><span>Penalty</span><span>29.99%</span></div>
<div class="st">Active Override Pricing</div><div class="kv"><span>No Active Override Pricing</span><span></span></div></div>
<div class="bot"><div class="ar">Associated Users</div><div class="ar">Recent History</div><div class="ar">External Accounts</div></div></div>

<div class="ph" style="left:344px;top:1424px;height:258px"><div class="hd"><div class="sb">Search</div><div class="nm">Sierra T. Ferguson <i></i></div></div><div class="ar">Account</div><div class="ar">Customer Info</div><div class="ar">Associated Users</div><div class="bd"><div class="tabs"><span class="a">8898</span><span>&#9678;</span></div><div class="pob">Authorized User</div>
<div class="fl">Name</div><div class="fr">James R. Ferguson</div><div class="fl">Date of Birth</div><div class="fr">12/26/97</div></div>
<div class="bot"><div class="ar">Recent History</div><div class="ar">External Accounts</div></div></div>
<div class="ph" style="left:439px;top:1424px;height:258px"><div class="hd"><div class="sb">Search</div><div class="nm">Sierra T. Ferguson <i></i></div></div><div class="ar">Account</div><div class="ar">Customer Info</div><div class="ar">Associated Users</div><div class="bd"><div class="tabs"><span class="a">8898</span><span>&#9678;</span></div><div class="pob">Authorized User</div>
<div class="fl">Name</div><div class="fr">James R. Ferguson</div><div class="fl">Date of Birth</div><div class="fr">12/26/97</div>
<div class="pob" style="margin-top:6px">Power of Attorney</div><div class="fl">Name</div><div class="fr">Samuel R. Peters</div><div class="fl">Date of Birth</div><div class="fr">12/26/97</div></div>
<div class="bot"><div class="ar">Recent History</div><div class="ar">External Accounts</div></div></div>

<div class="ph" style="left:552px;top:1424px;height:259px"><div class="hd"><div class="sb">Search</div><div class="nm">Sierra T. Ferguson <i></i></div><div class="chs"><span class="ch"></span></div></div><div class="ar">Account</div><div class="ar">Customer Info</div><div class="ar">Recent History</div><div class="bd">
<div class="hi">Mar 11, 2024 | 10:45 AM<b>Payment <span class="pill y"></span></b></div>
<div class="hi">Feb 19, 2024 | 12:36 PM<b>Contact Details Change</b></div>
<div class="hi">Jan 17, 2024 | 9:24 AM<b>Express Payment <span class="pill"></span></b><div class="kv"><span>Type</span><span>Debit</span></div><div class="kv"><span>Amount</span><span>$35.00</span></div><div style="height:5px;background:#eef3fb;text-align:center;color:#2a62c2">Full Details</div></div>
<div class="hi">Dec 15, 2023 | 15:36 AM<b>Scheduled Payment <span class="pill"></span></b></div>
<div class="hi">Nov 19, 2023 | 15:36 AM<b>Related User Change</b></div>
<div class="hi">Oct 18, 2023 | 11:36 AM<b>Autopay <span class="pill"></span></b></div>
<div class="hi">Aug 12, 2023 | 12:46 PM</div></div>
<div class="bot"><div class="ar">External Bank Accounts &amp; Cards</div></div></div>
<div class="ph" style="left:643px;top:1424px;height:259px"><div class="hd"><div class="sb">Search</div><div class="nm">Sierra T. Ferguson <i></i></div><div class="chs"><span class="ch"></span></div></div><div class="ar">Account</div><div class="ar">Customer Info</div><div class="ar">Recent History</div><div class="bd">
<div class="st" style="margin-bottom:5px">Express Payment</div>
<div class="kv"><span>Confirmation Number</span><span>CR39245</span></div><div class="kv"><span>Payment Date</span><span>Dec 17, 2023</span></div><div class="kv"><span>Status</span><span>Posted</span></div><div class="kv"><span>Due Date</span><span>Dec 20, 2023</span></div><div class="kv"><span>Amount</span><span>$35.00</span></div><div class="kv"><span>Fee</span><span>$4.99</span></div><div class="kv"><span>Payment Type</span><span>Phone</span></div><div class="kv"><span>Source</span><span>Debit 4832</span></div><div class="kv"><span>Bank Name</span><span>Wells Fargo</span></div><div class="kv"><span>Statement Date</span><span>Feb 24, 2024</span></div>
<div class="st" style="margin-top:8px">Notes</div><div class="note"><b>Feb 19, 2024</b><br>Lorem ipsum dolor sit amet, consectetur adipiscing elit, sed do eiusmod tempor incididunt ut labore et.</div><div class="note"><b>Dec 3, 2023</b><br>Duis aute irure dolor in reprehenderit in voluptate velit esse cillum dolore eu fugiat nulla pariatur.</div></div>
<div class="bot"><div class="ar">External Bank Accounts &amp; Cards</div></div></div>

<div class="ph" style="left:750px;top:1426px;height:256px"><div class="hd"><div class="sb">Search</div><div class="nm">Sierra T. Ferguson <i></i></div><div class="chs"><span class="ch"></span></div></div><div class="ar">Account</div><div class="ar">Customer Info</div><div class="ar">Recent History</div><div class="bd">
<div class="hi">Mar 11, 2024 | 10:45 AM<b>Payment <span class="pill y"></span></b><div class="kv"><span>Card</span><span>4832</span></div><div class="kv"><span>Amount</span><span>$35.00</span></div></div>
<div class="hi">Feb 19, 2024 | 12:36 PM<b>Contact Details Change</b><div class="kv"><span>Card</span><span>4832</span></div><div class="kv"><span>New Address</span><span>5552 W.</span></div></div>
<div class="hi">Jan 17, 2024 | 9:24 AM<b>Express Payment</b><div class="kv"><span>Card</span><span>4832</span></div><div class="kv"><span>Amount</span><span>$35.00</span></div><div class="kv"><span>Fee</span><span>$4.99</span></div><div style="height:5px;background:#eef3fb;text-align:center;color:#2a62c2">Full Details</div></div>
<div class="hi">Dec 16, 2023 | 1:12 PM<b>Scheduled Payment</b><div class="kv"><span>Card</span><span>4832</span></div><div class="kv"><span>Amount</span><span>$35.00</span></div></div>
<div class="hi">Nov 16, 2023 | 1:12 PM<b>Payment</b></div></div>
<div class="bot"><div class="ar">External Bank Accounts</div></div></div>
<div class="ph" style="left:840px;top:1426px;height:256px"><div class="hd"><div class="sb">Search</div><div class="nm">Sierra T. Ferguson <i></i></div><div class="chs"><span class="ch"></span></div></div><div class="ar">Account</div><div class="ar">Customer Info</div><div class="ar">Recent History</div><div class="bd">
<div class="st" style="margin-bottom:5px">Express Payment</div>
<div class="kv"><span>Confirmation Number</span><span>CR39245</span></div><div class="kv"><span>Payment Date</span><span>Dec 17, 2023</span></div><div class="kv"><span>Status</span><span>Posted</span></div><div class="kv"><span>Amount</span><span>$35.00</span></div><div class="kv"><span>Payment Type</span><span>Phone</span></div><div class="kv"><span>Source</span><span>Debit 4832</span></div><div class="kv"><span>Bank Name</span><span>Wells Fargo</span></div><div class="kv"><span>Statement Date</span><span>Feb 24, 2024</span></div>
<div class="st" style="margin-top:8px">Notes</div><div class="note"><b>Feb 19, 2024</b><br>Lorem ipsum dolor sit amet, consectetur adipiscing elit, sed do eiusmod tempor.</div><div class="note"><b>Dec 3, 2023</b><br>Duis aute irure dolor in reprehenderit in voluptate velit esse.</div></div>
<div class="bot"><div class="ar">External Bank Accounts</div></div></div>

<div class="ph" style="left:975px;top:1426px;height:220px"><div class="hd"><div class="sb">Search</div><div class="nm">Sierra T. Ferguson <i></i></div></div><div class="ar">Account</div><div class="ar">Customer Info</div><div class="ar er">Pricing Strategy</div><div class="bd"><div class="srb">Pricing Strategy</div><div class="st">Current Strategy</div>
<div style="text-align:center;font-size:2.6px;color:#666;padding:3px 0"><span style="font-size:6px">&#9888;</span><br>Failed to Load<br><span class="btn">Refresh</span></div>
<div class="st">APR</div><div class="kv"><span>Purchase</span><span>29.24%</span></div><div class="kv"><span>Cash Advance</span><span>29.24%</span></div><div class="kv"><span>Penalty</span><span>29.99%</span></div><div class="st">Active Override Pricing</div><div class="kv"><span>No Active Override Pricing</span><span></span></div></div>
<div class="bot"><div class="ar">Associated Users</div><div class="ar">Recent History</div><div class="ar">External Accounts</div></div></div>
<div class="ph" style="left:1068px;top:1426px;height:222px"><div class="hd"><div class="sb">Search</div><div class="nm">Sierra T. Ferguson <i></i></div></div><div class="ar">Account</div><div class="ar">Customer Info</div><div class="ar er">Pricing Strategy</div><div class="bd"><div class="ctr" style="top:55px"><div class="ic">&#9888;</div>Failed to Load<br>An error occurred while loading pricing information<br><span class="btn">Refresh</span></div></div>
<div class="bot"><div class="ar">Associated Users</div><div class="ar">Recent History</div><div class="ar">External Accounts</div></div></div>

<!-- ===== EXTERNAL BANK CARDS ===== -->
<div class="sh" style="left:47px;top:1745px">EXTERNAL BANK&nbsp; CARDS</div>
<div class="ln" style="left:130px;top:1749px;width:1037px"></div>
<div class="ct" style="left:92px;top:1778px">Default</div>
<div class="ct" style="left:190px;top:1778px">Card Error</div>
<div class="dash" style="left:47px;top:1789px;width:190px;height:268px"></div>

<div class="ph" style="left:52px;top:1795px;height:257px"><div class="hd"><div class="sb">Search</div><div class="nm">Sierra T. Ferguson <i></i></div></div><div class="ar">Account</div><div class="ar">Customer Info</div><div class="ar">Pricing Strategy</div><div class="ar">Recent History</div><div class="ar">External Accounts</div><div class="bd">
<div class="st">Debit Cards</div><div class="row"><div class="cd"><b></b><span class="v"></span></div><div class="cd"><b></b><span class="v"></span></div></div><div class="row" style="margin-top:3px"><div class="cd"><b></b><span class="v"></span></div></div>
<div class="st">External Bank Accounts</div><div class="row"><div class="cd"><b></b><p></p><span class="v" style="width:3px;height:3px"></span></div><div class="cd"><b></b><p></p><span class="v" style="width:3px;height:3px"></span></div></div>
<div class="cd" style="margin-top:3px;background:#eef3fc;border-color:#e6ecf7;text-align:center;padding-top:7px;font-size:6px;color:#3b78d8">&#8853;</div></div></div>
<div class="ph" style="left:149px;top:1795px;height:257px"><div class="hd"><div class="sb">Search</div><div class="nm">Sierra T. Ferguson <i></i></div></div><div class="ar">Account</div><div class="ar">Customer Info</div><div class="ar">Pricing Strategy</div><div class="ar">Recent History</div><div class="ar er">External Accounts</div><div class="bd">
<div class="st">Debit Cards</div><div class="row"><div class="cd" style="text-align:center;padding-top:5px">&#9888;<br>Failed to Load</div><div class="cd"><b></b><span class="v"></span></div></div><div class="row" style="margin-top:3px"><div class="cd"><b></b><span class="v"></span></div></div>
<div class="st">External Bank Accounts</div><div class="row"><div class="cd"><b></b><p></p><span class="v" style="width:3px;height:3px"></span></div><div class="cd"><b></b><p></p><span class="v" style="width:3px;height:3px"></span></div></div>
<div class="cd" style="margin-top:3px;background:#eef3fc;border-color:#e6ecf7;text-align:center;padding-top:7px;font-size:6px;color:#3b78d8">&#8853;</div></div></div>

</body></html>
